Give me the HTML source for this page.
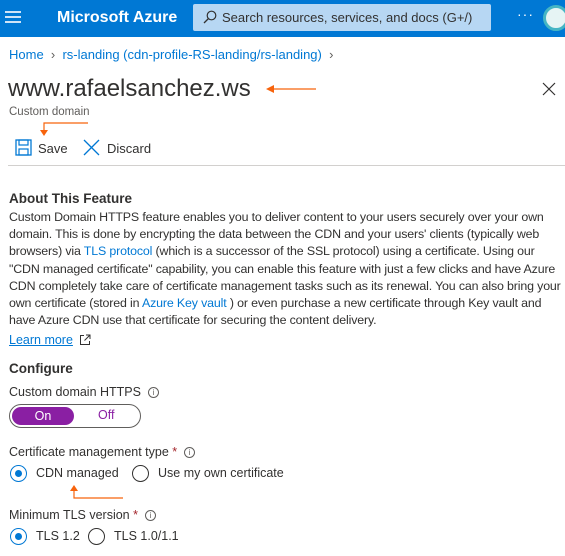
<!DOCTYPE html>
<html><head><meta charset="utf-8"><style>
*{margin:0;padding:0;box-sizing:border-box}
body{width:565px;height:556px;overflow:hidden;background:#fff;font-family:"Liberation Sans",sans-serif;color:#323130;position:relative}
.a{position:absolute;white-space:nowrap}
.top{position:absolute;left:0;top:0;width:565px;height:37px;background:#0078d4}
a{color:#0078d4;text-decoration:none}
.p{font-size:12.4px;line-height:17.2px;color:#323130;letter-spacing:-0.15px}
.info{display:inline-block;width:11px;height:11px;border:1px solid #605e5c;border-radius:50%;font-size:8px;line-height:9px;text-align:center;color:#605e5c;vertical-align:middle}
.rad{position:absolute;width:17px;height:17px;border-radius:50%;border:1.5px solid #323130}
.rad.on{border-color:#0078d4}
.rad.on::after{content:"";position:absolute;left:3.5px;top:3.5px;width:7px;height:7px;border-radius:50%;background:#0078d4}
</style></head><body>
<div class="top"></div>
<div class="a" style="left:5px;top:11px;width:16px;height:2px;background:#cfe4f7;box-shadow:0 5px 0 #cfe4f7,0 10px 0 #cfe4f7"></div>
<div class="a" style="left:57px;top:9px;font-size:16px;font-weight:bold;color:#fff">Microsoft Azure</div>
<div class="a" style="left:193px;top:4px;width:298px;height:27px;background:#b7d7f3;border-radius:2px"></div>
<svg class="a" style="left:203px;top:10px" width="14" height="14" viewBox="0 0 14 14"><circle cx="8.5" cy="5.5" r="4.3" fill="none" stroke="#323130" stroke-width="1.2"/><path d="M5.5 8.5 L1 13" stroke="#323130" stroke-width="1.3"/></svg>
<div class="a" style="left:222px;top:10px;font-size:13px;color:#323130">Search resources, services, and docs (G+/)</div>
<div class="a" style="left:517px;top:6px;font-size:14px;color:#fff;letter-spacing:1px">···</div>
<div class="a" style="left:543px;top:5px;width:26px;height:26px;border-radius:50%;background:#e6f4f4;border:3px solid #45b5c4"></div>
<div class="a" style="left:9px;top:47px;font-size:13px;color:#0078d4">Home <span style="color:#605e5c">&nbsp;›&nbsp;</span> rs-landing (cdn-profile-RS-landing/rs-landing) <span style="color:#605e5c">&nbsp;›</span></div>
<div class="a" style="left:8px;top:75px;font-size:24px;color:#323130">www.rafaelsanchez.ws</div>
<svg class="a" style="left:250px;top:82px" width="70" height="14"><path d="M18 7 H66" stroke="#f7630c" stroke-width="1.2"/><path d="M16 7 L24 3 L24 11 Z" fill="#f7630c"/></svg>
<svg class="a" style="left:542px;top:82px" width="14" height="14"><path d="M1 1 L13 13 M13 1 L1 13" stroke="#323130" stroke-width="1.2"/></svg>
<div class="a" style="left:9px;top:106px;font-size:11.5px;color:#605e5c">Custom domain</div>
<svg class="a" style="left:40px;top:121px" width="50" height="16"><path d="M48 2 H4 V10" stroke="#f7630c" stroke-width="1.2" fill="none"/><path d="M0 9 L8 9 L4 15 Z" fill="#f7630c"/></svg>
<svg class="a" style="left:15px;top:139px" width="17" height="17" viewBox="0 0 17 17"><rect x="1" y="1" width="15" height="15" fill="none" stroke="#0078d4" stroke-width="1.3"/><rect x="4" y="1" width="9" height="5" fill="none" stroke="#0078d4" stroke-width="1.2"/><rect x="4" y="10" width="9" height="6" fill="none" stroke="#0078d4" stroke-width="1.2"/></svg>
<div class="a" style="left:38px;top:141px;font-size:13px">Save</div>
<svg class="a" style="left:83px;top:139px" width="17" height="17"><path d="M1 1 L16 16 M16 1 L1 16" stroke="#0078d4" stroke-width="1.3"/></svg>
<div class="a" style="left:107px;top:141px;font-size:13px">Discard</div>
<div class="a" style="left:8px;top:165px;width:557px;height:1px;background:#d2d0ce"></div>
<div class="a" style="left:9px;top:191px;font-size:13.5px;font-weight:bold">About This Feature</div>
<div class="a p" style="left:9px;top:209px;white-space:normal;width:556px">Custom Domain HTTPS feature enables you to deliver content to your users securely over your own domain. This is done by encrypting the data between the CDN and your users' clients (typically web browsers) via <a>TLS protocol</a> (which is a successor of the SSL protocol) using a certificate. Using our "CDN managed certificate" capability, you can enable this feature with just a few clicks and have Azure CDN completely take care of certificate management tasks such as its renewal. You can also bring your own certificate (stored in <a>Azure Key vault</a> ) or even purchase a new certificate through Key vault and have Azure CDN use that certificate for securing the content delivery.</div>
<div class="a" style="left:9px;top:333px;font-size:12.5px;color:#0078d4;text-decoration:underline">Learn more</div>
<svg class="a" style="left:79px;top:334px" width="12" height="12"><path d="M5 1.5 H1.5 V10.5 H10.5 V7 M7 1 H11 V5 M11 1 L5.5 6.5" stroke="#323130" fill="none" stroke-width="1"/></svg>
<div class="a" style="left:9px;top:361px;font-size:13.5px;font-weight:bold">Configure</div>
<div class="a" style="left:9px;top:385px;font-size:12.5px">Custom domain HTTPS &nbsp;<span class="info">i</span></div>
<div class="a" style="left:9px;top:404px;width:132px;height:24px;border:1px solid #605e5c;border-radius:12px"></div>
<div class="a" style="left:12px;top:407px;width:62px;height:18px;border-radius:9px;background:#8a1fa3;color:#fff;font-size:12.5px;text-align:center;line-height:18px">On</div>
<div class="a" style="left:98px;top:408px;font-size:12.5px;color:#8a1fa3">Off</div>
<div class="a" style="left:9px;top:445px;font-size:12.5px">Certificate management type <span style="color:#a4262c">*</span> &nbsp;<span class="info">i</span></div>
<div class="rad on" style="left:10px;top:465px"></div>
<div class="a" style="left:36px;top:466px;font-size:12.5px">CDN managed</div>
<div class="rad" style="left:132px;top:465px"></div>
<div class="a" style="left:158px;top:466px;font-size:12.5px">Use my own certificate</div>
<svg class="a" style="left:68px;top:484px" width="56" height="16"><path d="M6 6 V14 H55" stroke="#f7630c" stroke-width="1.2" fill="none"/><path d="M2 7 L10 7 L6 1 Z" fill="#f7630c"/></svg>
<div class="a" style="left:9px;top:508px;font-size:12.5px">Minimum TLS version <span style="color:#a4262c">*</span> &nbsp;<span class="info">i</span></div>
<div class="rad on" style="left:10px;top:528px"></div>
<div class="a" style="left:36px;top:529px;font-size:12.5px">TLS 1.2</div>
<div class="rad" style="left:88px;top:528px"></div>
<div class="a" style="left:114px;top:529px;font-size:12.5px">TLS 1.0/1.1</div>
</body></html>
